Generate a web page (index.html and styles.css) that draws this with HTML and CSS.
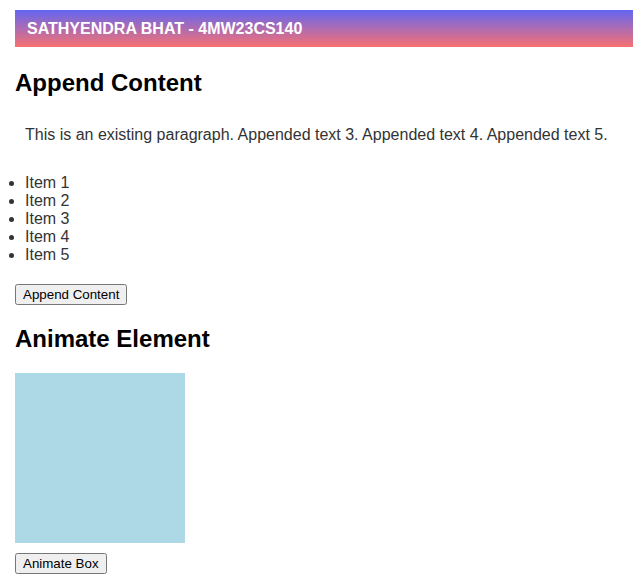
FILE: index.html
```html
<!DOCTYPE html>
<html>
<head>
<meta charset="utf-8">
<title>Append and Animate</title>
<link rel="stylesheet" href="styles.css">
</head>
<body>
<header class="banner">SATHYENDRA BHAT - 4MW23CS140</header>
<h2 class="title">Append Content</h2>
<p class="para">This is an existing paragraph. Appended text 3. Appended text 4. Appended text 5.</p>
<ul class="items">
<li>Item 1</li>
<li>Item 2</li>
<li>Item 3</li>
<li>Item 4</li>
<li>Item 5</li>
</ul>
<button class="btn">Append Content</button>
<h2 class="title">Animate Element</h2>
<div class="box"></div>
<button class="btn btn-gap">Animate Box</button>
</body>
</html>
```
FILE: styles.css
```css
html {
  background: #fff;
}
body {
  margin: 0;
  padding: 10px 0 0 15px;
  font-family: "Liberation Sans", Arial, sans-serif;
  font-size: 16px;
  color: #333;
}
.banner {
  display: block;
  background: linear-gradient(to bottom, #6366f1, #f87171);
  color: #fff;
  font-weight: bold;
  font-size: 16px;
  line-height: 17px;
  padding: 10px 12px;
  margin-bottom: 22px;
}
.title {
  color: #000;
  font-size: 24px;
  margin: 20px 0;
}
.para {
  padding: 9px 10px 11px;
  margin: 16px 0;
}
.items {
  list-style: disc outside;
  padding-left: 10px;
  margin: 19px 0 20px;
}
.btn {
  font-family: "Liberation Sans", Arial, sans-serif;
  font-size: 13.33px;
  color: #000;
}
.box {
  width: 170px;
  height: 170px;
  margin-top: 20px;
  background: lightblue;
}
.btn-gap {
  margin-top: 10px;
}
```
